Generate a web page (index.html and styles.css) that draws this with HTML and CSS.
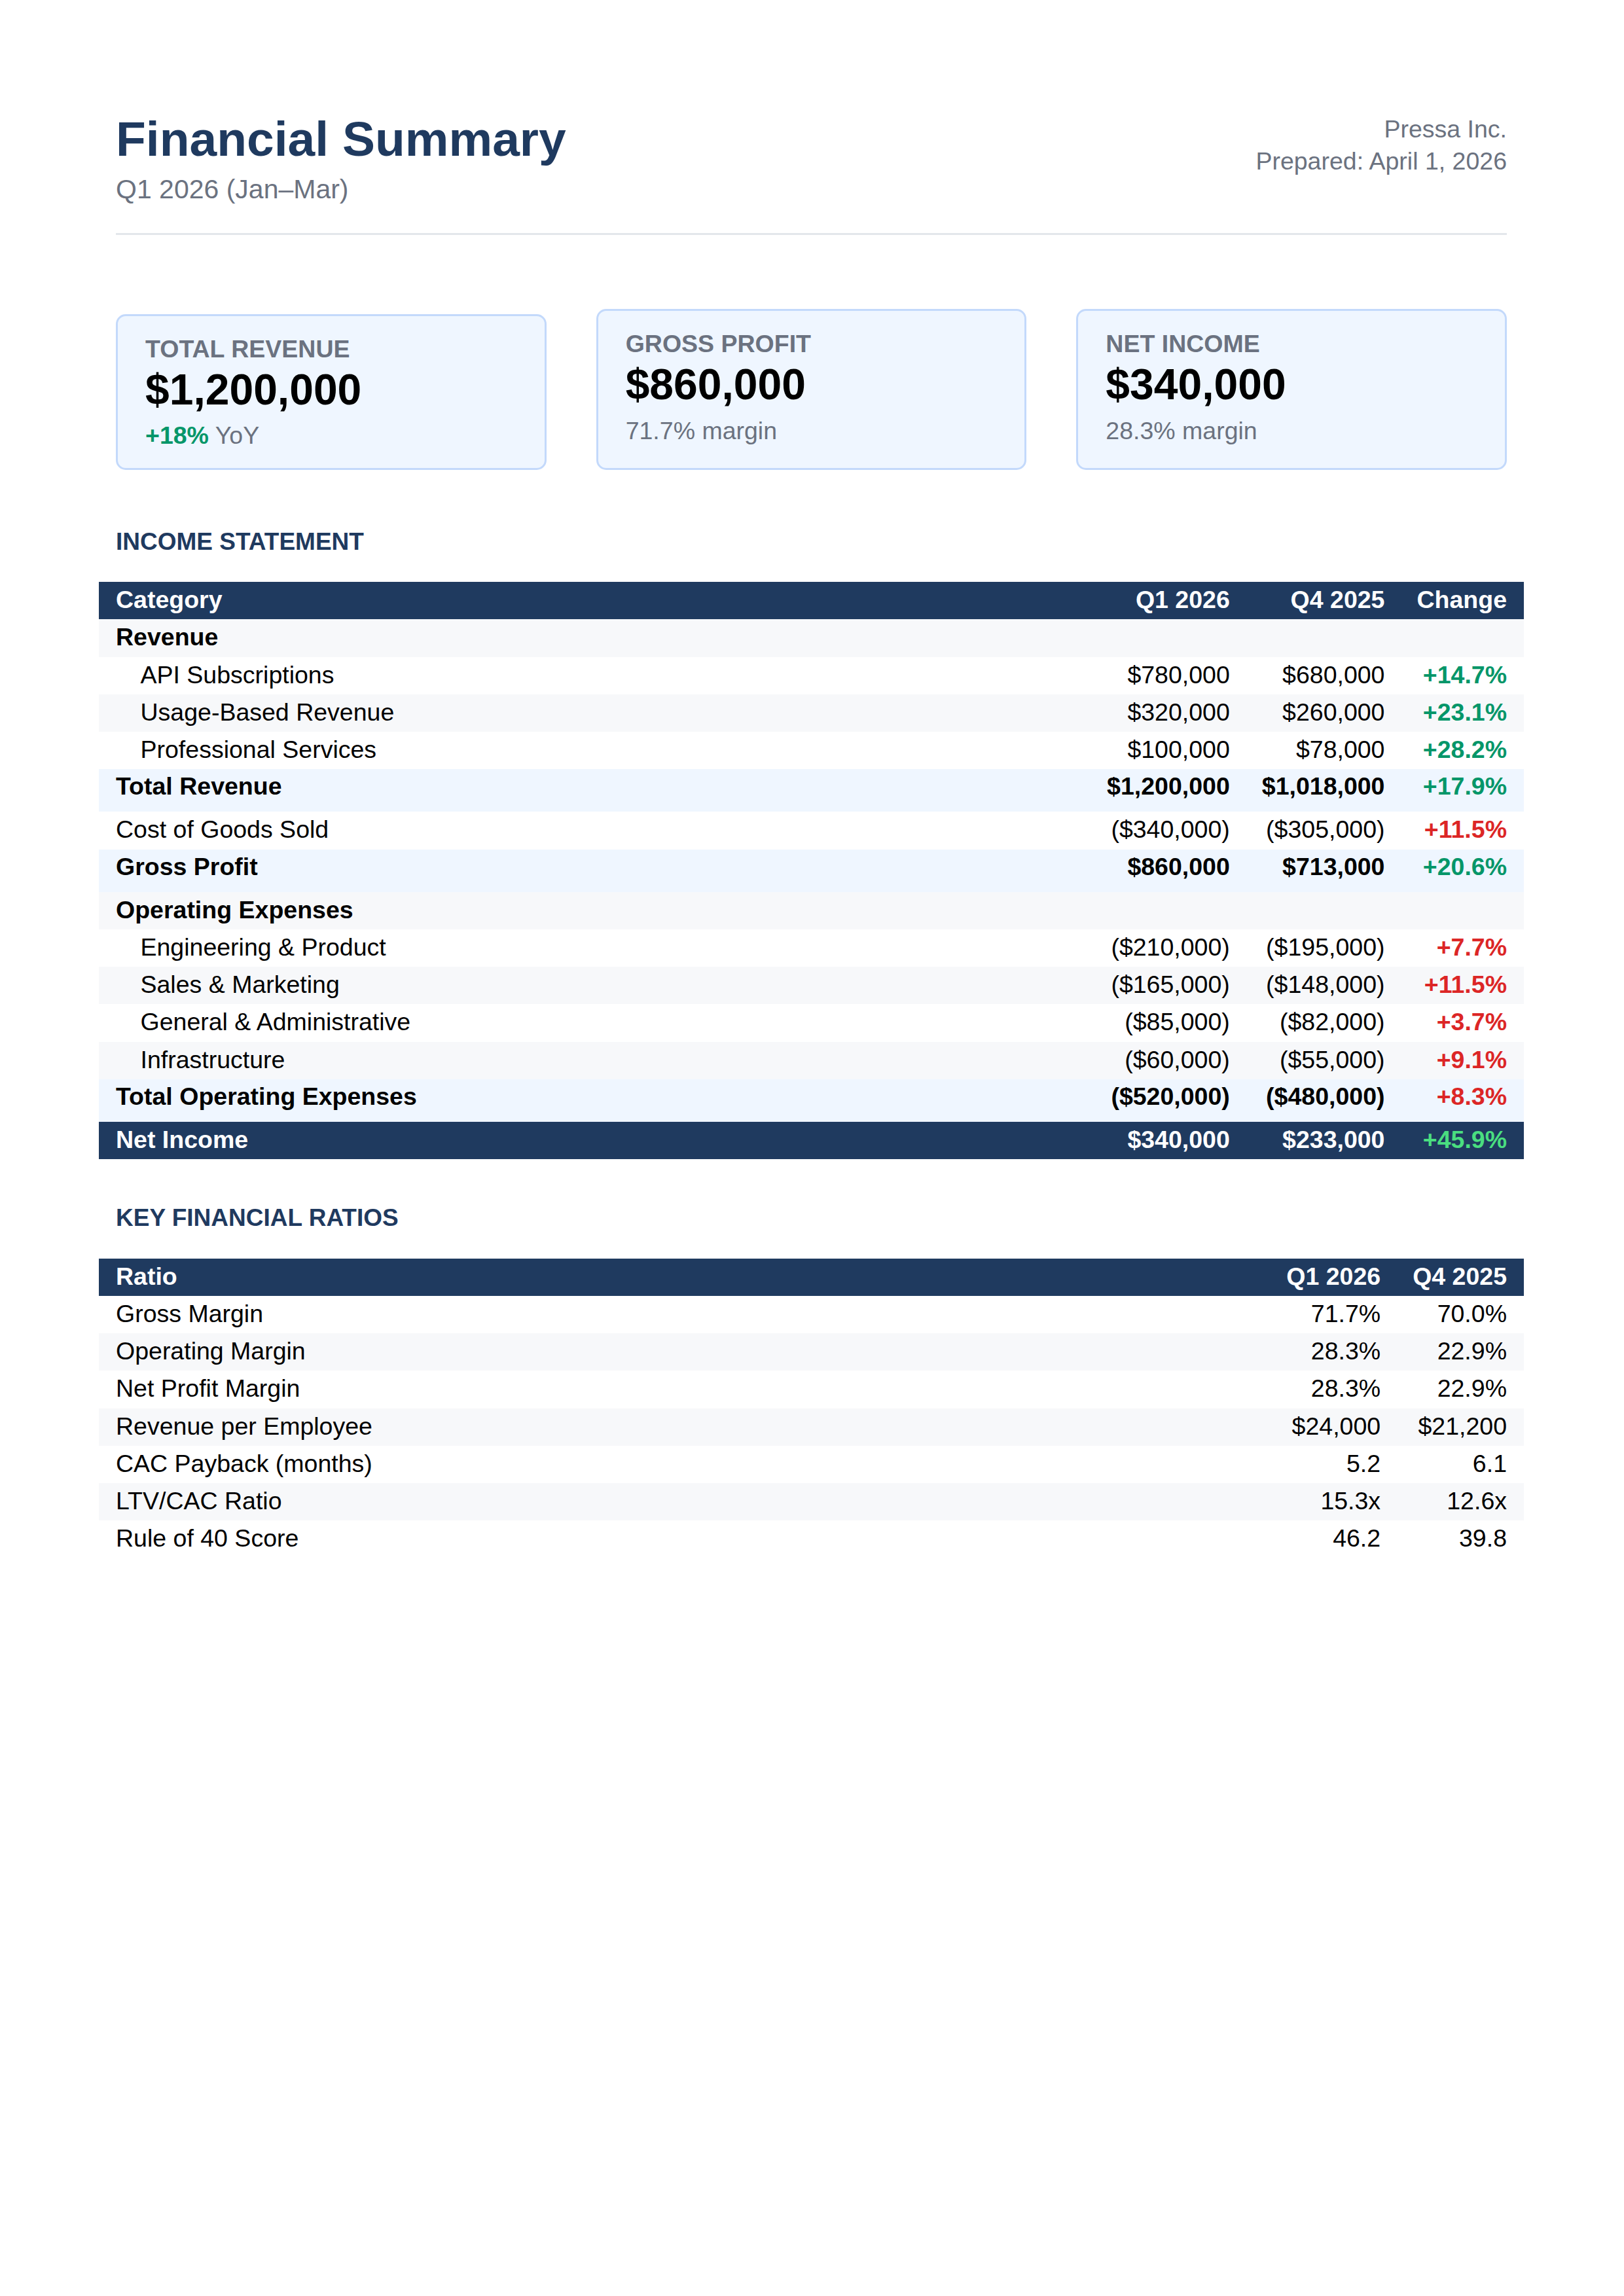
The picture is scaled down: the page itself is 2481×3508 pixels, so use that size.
FILE: index.html
```html
<!DOCTYPE html>
<html lang="en">
<head>
  <meta charset="UTF-8" />
  <meta name="viewport" content="width=device-width, initial-scale=1.0" />
  <title>Financial Summary – Q1 2026</title>
  <link rel="stylesheet" href="styles.css">
</head>
<body>
  <div class="pagina">
    <header class="cabecera">
      <div>
        <h1>Financial Summary</h1>
        <div class="periodo">Q1 2026 (Jan–Mar)</div>
      </div>
      <div class="meta">
        <div>Pressa Inc.</div>
        <div>Prepared: April 1, 2026</div>
      </div>
    </header>

    <div class="tarjetas">
      <div class="tarjeta">
        <div class="tarjeta-label">Total Revenue</div>
        <div class="tarjeta-valor">$1,200,000</div>
        <div class="tarjeta-sub tarjeta-delta"><span class="up">+18%</span> YoY</div>
      </div>
      <div class="tarjeta">
        <div class="tarjeta-label">Gross Profit</div>
        <div class="tarjeta-valor">$860,000</div>
        <div class="tarjeta-sub">71.7% margin</div>
      </div>
      <div class="tarjeta">
        <div class="tarjeta-label">Net Income</div>
        <div class="tarjeta-valor">$340,000</div>
        <div class="tarjeta-sub">28.3% margin</div>
      </div>
    </div>

    <h2 class="titulo-seccion">Income Statement</h2>
    <table class="tabla">
      <thead>
        <tr>
          <th>Category</th>
          <th class="num">Q1 2026</th>
          <th class="num">Q4 2025</th>
          <th class="num">Change</th>
        </tr>
      </thead>
      <tbody>
        <tr class="grupo"><td colspan="4">Revenue</td></tr>
        <tr>
          <td class="item">API Subscriptions</td>
          <td class="num">$780,000</td>
          <td class="num">$680,000</td>
          <td class="num up">+14.7%</td>
        </tr>
        <tr class="gris">
          <td class="item">Usage-Based Revenue</td>
          <td class="num">$320,000</td>
          <td class="num">$260,000</td>
          <td class="num up">+23.1%</td>
        </tr>
        <tr>
          <td class="item">Professional Services</td>
          <td class="num">$100,000</td>
          <td class="num">$78,000</td>
          <td class="num up">+28.2%</td>
        </tr>
        <tr class="total">
          <td>Total Revenue</td>
          <td class="num">$1,200,000</td>
          <td class="num">$1,018,000</td>
          <td class="num up">+17.9%</td>
        </tr>
        <tr>
          <td>Cost of Goods Sold</td>
          <td class="num">($340,000)</td>
          <td class="num">($305,000)</td>
          <td class="num down">+11.5%</td>
        </tr>
        <tr class="total">
          <td>Gross Profit</td>
          <td class="num">$860,000</td>
          <td class="num">$713,000</td>
          <td class="num up">+20.6%</td>
        </tr>
        <tr class="grupo"><td colspan="4">Operating Expenses</td></tr>
        <tr>
          <td class="item">Engineering &amp; Product</td>
          <td class="num">($210,000)</td>
          <td class="num">($195,000)</td>
          <td class="num down">+7.7%</td>
        </tr>
        <tr class="gris">
          <td class="item">Sales &amp; Marketing</td>
          <td class="num">($165,000)</td>
          <td class="num">($148,000)</td>
          <td class="num down">+11.5%</td>
        </tr>
        <tr>
          <td class="item">General &amp; Administrative</td>
          <td class="num">($85,000)</td>
          <td class="num">($82,000)</td>
          <td class="num down">+3.7%</td>
        </tr>
        <tr class="gris">
          <td class="item">Infrastructure</td>
          <td class="num">($60,000)</td>
          <td class="num">($55,000)</td>
          <td class="num down">+9.1%</td>
        </tr>
        <tr class="total">
          <td>Total Operating Expenses</td>
          <td class="num">($520,000)</td>
          <td class="num">($480,000)</td>
          <td class="num down">+8.3%</td>
        </tr>
        <tr class="neto">
          <td>Net Income</td>
          <td class="num">$340,000</td>
          <td class="num">$233,000</td>
          <td class="num">+45.9%</td>
        </tr>
      </tbody>
    </table>

    <h2 class="titulo-seccion">Key Financial Ratios</h2>
    <table class="tabla ratios">
      <thead>
        <tr>
          <th>Ratio</th>
          <th class="num">Q1 2026</th>
          <th class="num">Q4 2025</th>
        </tr>
      </thead>
      <tbody>
        <tr><td>Gross Margin</td><td class="num">71.7%</td><td class="num">70.0%</td></tr>
        <tr><td>Operating Margin</td><td class="num">28.3%</td><td class="num">22.9%</td></tr>
        <tr><td>Net Profit Margin</td><td class="num">28.3%</td><td class="num">22.9%</td></tr>
        <tr><td>Revenue per Employee</td><td class="num">$24,000</td><td class="num">$21,200</td></tr>
        <tr><td>CAC Payback (months)</td><td class="num">5.2</td><td class="num">6.1</td></tr>
        <tr><td>LTV/CAC Ratio</td><td class="num">15.3x</td><td class="num">12.6x</td></tr>
        <tr><td>Rule of 40 Score</td><td class="num">46.2</td><td class="num">39.8</td></tr>
      </tbody>
    </table>
  </div>
</body>
</html>
```

FILE: styles.css
```css
:root {
  --navy: #1f3a5f;
  --gris-texto: #6b7280;
  --gris-fila: #f7f8fa;
  --azul-fila: #eff6ff;
  --verde: #059669;
  --rojo: #dc2626;
}

* {
  box-sizing: border-box;
  margin: 0;
  padding: 0;
}

body {
  font-family: "Liberation Sans", Arial, sans-serif;
  font-size: 37.5px;
  line-height: 1.2;
  color: #000;
  background: #fff;
}

.pagina {
  padding: 167px 179px 200px 177px;
}

.cabecera {
  display: flex;
  justify-content: space-between;
  align-items: flex-start;
  padding-bottom: 40px;
  border-bottom: 3px solid #e3e7eb;
}

h1 {
  font-size: 75px;
  line-height: 1.2;
  color: var(--navy);
  margin-bottom: 6px;
}

.periodo {
  font-size: 41px;
  line-height: 1.3;
  color: var(--gris-texto);
}

.meta {
  text-align: right;
  color: var(--gris-texto);
  line-height: 1.3;
  padding-top: 6px;
}

.tarjetas {
  display: grid;
  grid-template-columns: repeat(3, 1fr);
  column-gap: 76px;
  align-items: end;
  margin: 113px 0 88px;
}

.tarjeta {
  background: var(--azul-fila);
  border: 3px solid #c3d9fb;
  border-radius: 15px;
  padding: 28px 42px;
}

.tarjeta-label {
  font-weight: bold;
  text-transform: uppercase;
  color: var(--gris-texto);
}

.tarjeta-valor {
  font-size: 66px;
  font-weight: bold;
}

.tarjeta-sub {
  color: var(--gris-texto);
  line-height: 1.5;
  margin-top: 3px;
}

.tarjeta-delta {
  line-height: normal;
  margin-top: 9px;
}

.tarjeta-delta .up {
  font-weight: bold;
}

.titulo-seccion {
  font-size: 37px;
  line-height: 1.2;
  text-transform: uppercase;
  color: var(--navy);
  margin-bottom: 39px;
}

.tabla {
  width: calc(100% + 52px);
  margin: 0 -26px 68px;
  border-collapse: collapse;
}

.tabla th,
.tabla td {
  padding: 5px 26px 7.25px;
  text-align: left;
  white-space: nowrap;
}

.tabla th:first-child,
.tabla td:first-child {
  width: 100%;
}

.tabla thead th {
  background: var(--navy);
  color: #fff;
  font-weight: bold;
}

.tabla .num {
  text-align: right;
  padding-left: 23px;
}

.tabla .item {
  padding-left: 63.5px;
}

.tabla .up {
  color: var(--verde);
  font-weight: bold;
}

.tabla .down {
  color: var(--rojo);
  font-weight: bold;
}

.tabla .grupo td {
  background: var(--gris-fila);
  font-weight: bold;
}

.tabla .gris td {
  background: var(--gris-fila);
}

.tabla .total td {
  background: var(--azul-fila);
  font-weight: bold;
  padding-top: 4px;
  padding-bottom: 16px;
}

.tabla .neto td {
  background: var(--navy);
  color: #fff;
  font-weight: bold;
}

.tabla .neto td:last-child {
  color: #4ade80;
}

.ratios tbody tr:nth-child(even) td {
  background: var(--gris-fila);
}

.up {
  color: var(--verde);
}
```
